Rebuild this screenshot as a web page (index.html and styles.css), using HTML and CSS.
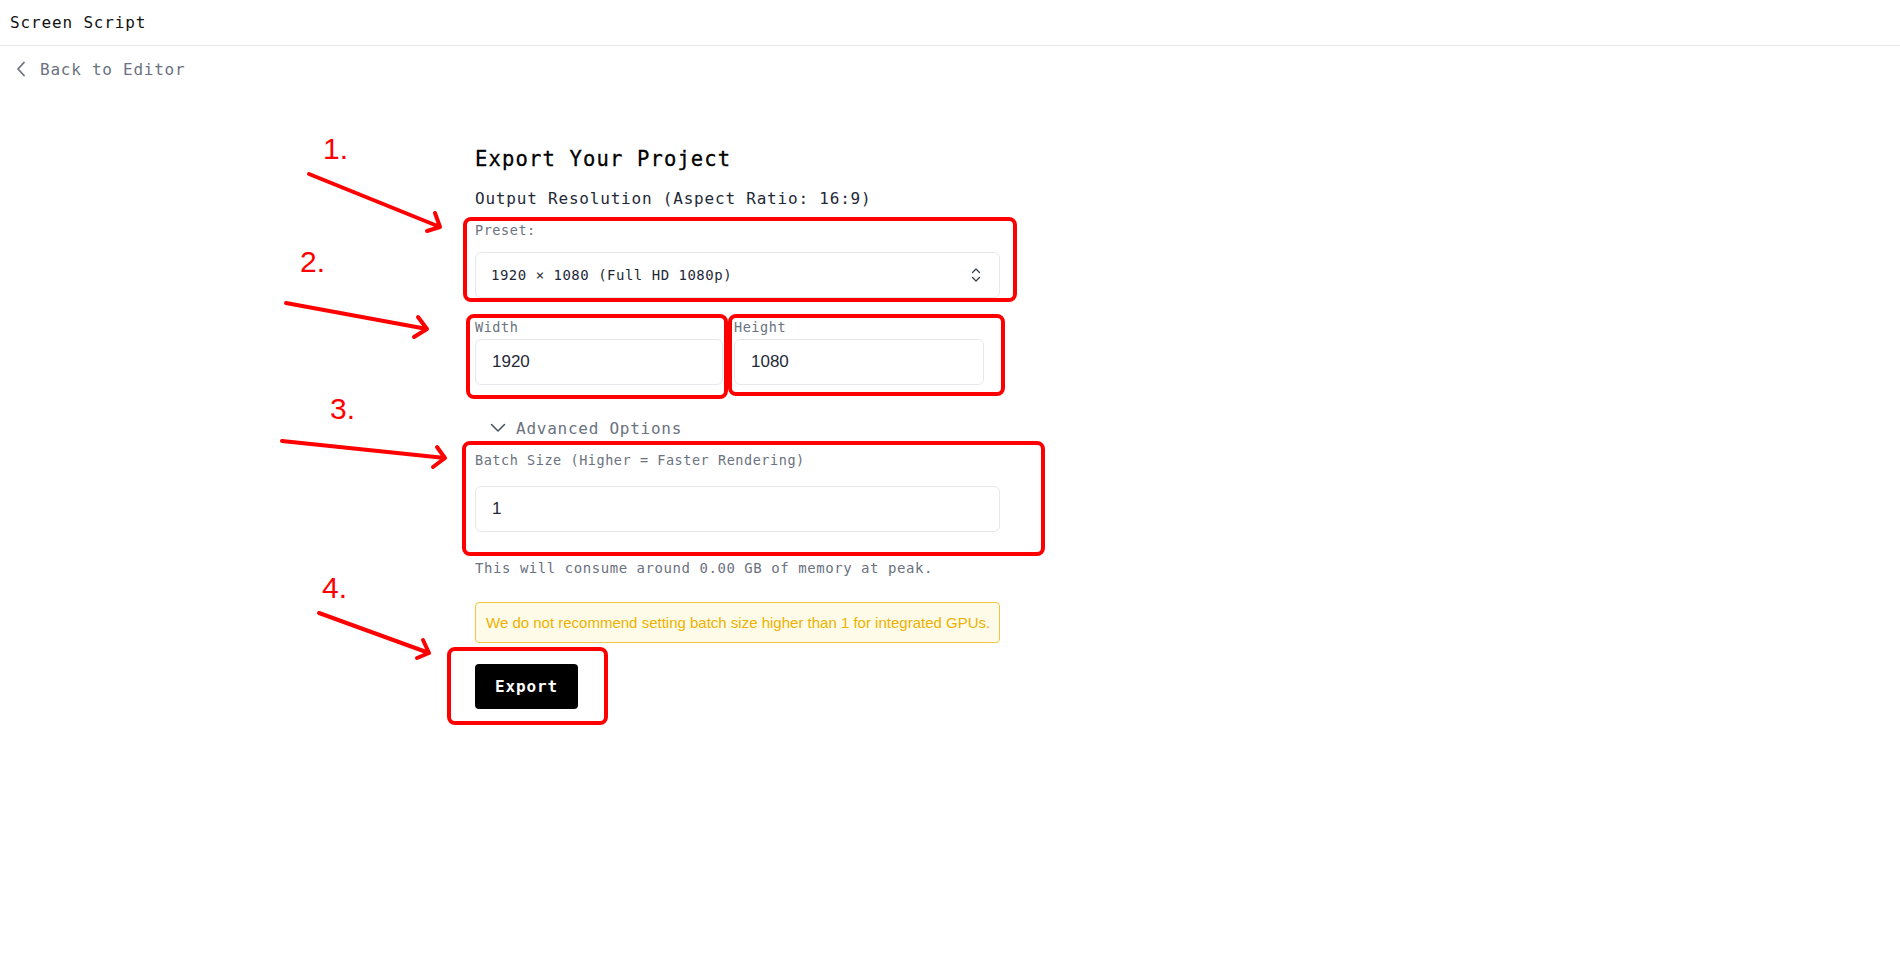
FILE: index.html
```html
<!DOCTYPE html>
<html lang="en">
<head>
<meta charset="utf-8">
<title>Screen Script</title>
<link rel="stylesheet" href="styles.css">
</head>
<body>
<header class="topbar"><span class="brand">Screen Script</span></header>
<a class="back" href="#">
  <svg class="back-icon" width="12" height="16" viewBox="0 0 12 16"><path d="M9 1.5 L3 8 L9 14.5" fill="none" stroke="#6b7280" stroke-width="1.8" stroke-linecap="round" stroke-linejoin="round"/></svg>
  <span>Back to Editor</span>
</a>
<main class="panel">
  <h1 class="title">Export Your Project</h1>
  <h2 class="subtitle">Output Resolution (Aspect Ratio: 16:9)</h2>
  <div class="field">
    <label class="label">Preset:</label>
    <div class="select">
      <span>1920 × 1080 (Full HD 1080p)</span>
      <svg width="10" height="16" viewBox="0 0 10 16"><path d="M1.5 5.5 L5 2 L8.5 5.5 M1.5 10.5 L5 14 L8.5 10.5" fill="none" stroke="#374151" stroke-width="1.3" stroke-linecap="round" stroke-linejoin="round"/></svg>
    </div>
  </div>
  <div class="dims">
    <div class="dim">
      <label class="label">Width</label>
      <div class="input">1920</div>
    </div>
    <div class="dim">
      <label class="label">Height</label>
      <div class="input">1080</div>
    </div>
  </div>
  <div class="advanced">
    <svg width="16" height="10" viewBox="0 0 16 10"><path d="M1.5 1.5 L8 8 L14.5 1.5" fill="none" stroke="#4b5563" stroke-width="1.6" stroke-linecap="round" stroke-linejoin="round"/></svg>
    <span>Advanced Options</span>
  </div>
  <div class="field batch">
    <label class="label">Batch Size (Higher = Faster Rendering)</label>
    <div class="input wide">1</div>
  </div>
  <p class="hint">This will consume around 0.00 GB of memory at peak.</p>
  <div class="warning">We do not recommend setting batch size higher than 1 for integrated GPUs.</div>
  <button class="export">Export</button>
</main>
<svg class="annotations" width="1900" height="970" viewBox="0 0 1900 970">
  <g fill="none" stroke="#ff0000" stroke-width="4" stroke-linecap="round" stroke-linejoin="round">
    <rect x="465" y="219" width="550" height="81" rx="6"/>
    <rect x="468" y="316" width="258" height="81" rx="6"/>
    <rect x="730" y="316" width="273" height="78" rx="6"/>
    <rect x="464" y="443" width="579" height="111" rx="6"/>
    <rect x="449" y="649" width="157" height="74" rx="6"/>
    <path d="M309 174 L440 227 M435 213 L440 227 L427 231"/>
    <path d="M286 303 L427 329 M418 317 L427 329 L414 337"/>
    <path d="M282 441 L445 458 M437 447 L445 458 L433 467"/>
    <path d="M319 613 L429 653 M423 640 L429 653 L417 658"/>
  </g>
  <g class="num" fill="#ff0000">
    <text x="323" y="159">1.</text>
    <text x="300" y="272">2.</text>
    <text x="330" y="419">3.</text>
    <text x="322" y="598">4.</text>
  </g>
</svg>
</body>
</html>
```

FILE: styles.css
```css
* { box-sizing: border-box; }
body {
  margin: 0;
  position: relative;
  width: 1900px;
  height: 970px;
  background: #fff;
  font-family: "DejaVu Sans Mono", monospace;
  color: #111827;
  overflow: hidden;
}
.topbar {
  height: 46px;
  border-bottom: 1px solid #e5e7eb;
  display: flex;
  align-items: center;
  padding-left: 10px;
}
.brand {
  font-size: 16px;
  letter-spacing: 0.85px;
  color: #111;
}
.back {
  display: flex;
  align-items: center;
  gap: 13px;
  height: 46px;
  padding-left: 15px;
  text-decoration: none;
  color: #6b7280;
  font-size: 16px;
  letter-spacing: 0.75px;
  width: max-content;
}
.panel {
  margin-left: 475px;
  width: 525px;
  padding-top: 53px;
}
.title {
  margin: 0;
  font-size: 20.5px;
  line-height: 28px;
  font-weight: normal;
  letter-spacing: 1.15px;
  color: #000;
  -webkit-text-stroke: 0.3px #000;
}
.subtitle {
  margin: 14px 0 0;
  font-size: 16px;
  line-height: 24px;
  font-weight: normal;
  letter-spacing: 0.8px;
  color: #1f2937;
}
.field { margin-top: 9px; }
.label {
  display: block;
  font-size: 13.5px;
  line-height: 20px;
  letter-spacing: 0.55px;
  color: #6b7280;
}
.select {
  margin-top: 12px;
  height: 46px;
  border: 1px solid #e5e7eb;
  border-radius: 6px;
  display: flex;
  align-items: center;
  justify-content: space-between;
  padding: 0 18px 0 15px;
  font-size: 14px;
  letter-spacing: 0.5px;
  color: #1f2937;
}
.dims {
  margin-top: 19px;
  display: grid;
  grid-template-columns: 248px 250px;
  column-gap: 11px;
}
.input {
  margin-top: 2px;
  height: 46px;
  border: 1px solid #e5e7eb;
  border-radius: 6px;
  display: flex;
  align-items: center;
  padding-left: 16px;
  font-family: "Liberation Sans", Arial, sans-serif;
  font-size: 17px;
  color: #1f2937;
}
.advanced {
  margin-top: 31px;
  display: flex;
  align-items: center;
  gap: 10px;
  padding-left: 15px;
  height: 24px;
  font-size: 16px;
  letter-spacing: 0.75px;
  color: #6b7280;
}
.batch { margin-top: 10px; }
.input.wide { margin-top: 16px; }
.hint {
  margin: 26px 0 0;
  font-size: 14px;
  line-height: 20px;
  letter-spacing: 0.55px;
  color: #6b7280;
}
.warning {
  margin-top: 24px;
  height: 41px;
  border: 1px solid #f6c443;
  background: #fefce8;
  border-radius: 4px;
  display: flex;
  align-items: center;
  padding-left: 10px;
  font-family: "Liberation Sans", Arial, sans-serif;
  font-size: 15px;
  color: #eeb000;
}
.export {
  margin-top: 21px;
  height: 45px;
  width: 103px;
  border: 0;
  border-radius: 4px;
  background: #000;
  color: #fff;
  font-family: "DejaVu Sans Mono", monospace;
  font-weight: bold;
  font-size: 16px;
  letter-spacing: 0.9px;
  padding: 0;
}
.annotations {
  position: absolute;
  top: 0;
  left: 0;
  pointer-events: none;
}
.num text {
  font-family: "Liberation Sans", Arial, sans-serif;
  font-size: 30px;
}
```
